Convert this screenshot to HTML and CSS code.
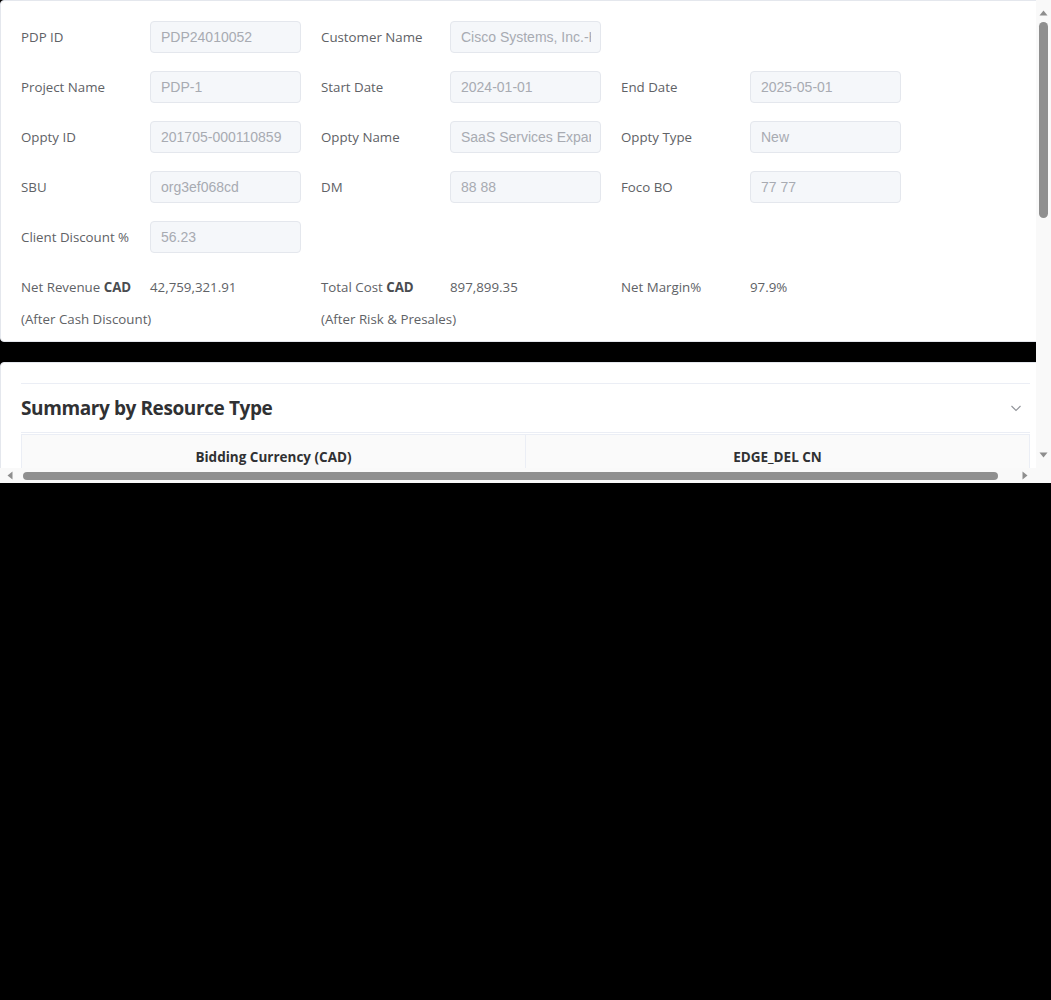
FILE: index.html
```html
<!DOCTYPE html>
<html lang="en">
<head>
<meta charset="utf-8">
<title>PDP Summary</title>
<link rel="stylesheet" href="styles.css">
</head>
<body>
<div class="frame">
  <div class="pane">
    <div class="canvas">
      <section class="card info">
        <div class="form-grid">
          <div class="item"><span class="label">PDP ID</span><input class="field" disabled value="PDP24010052"></div>
          <div class="item"><span class="label">Customer Name</span><input class="field" disabled value="Cisco Systems, Inc.-HQ"></div>
          <div class="item empty"></div>

          <div class="item"><span class="label">Project Name</span><input class="field" disabled value="PDP-1"></div>
          <div class="item"><span class="label">Start Date</span><input class="field" disabled value="2024-01-01"></div>
          <div class="item"><span class="label">End Date</span><input class="field" disabled value="2025-05-01"></div>

          <div class="item"><span class="label">Oppty ID</span><input class="field" disabled value="201705-000110859"></div>
          <div class="item"><span class="label">Oppty Name</span><input class="field" disabled value="SaaS Services Expansion"></div>
          <div class="item"><span class="label">Oppty Type</span><input class="field" disabled value="New"></div>

          <div class="item"><span class="label">SBU</span><input class="field" disabled value="org3ef068cd"></div>
          <div class="item"><span class="label">DM</span><input class="field" disabled value="88 88"></div>
          <div class="item"><span class="label">Foco BO</span><input class="field" disabled value="77 77"></div>

          <div class="item"><span class="label">Client Discount %</span><input class="field" disabled value="56.23"></div>
          <div class="item empty"></div>
          <div class="item empty"></div>

          <div class="stat">
            <div class="stat-line"><span class="label">Net Revenue <b>CAD</b></span><span class="value">42,759,321.91</span></div>
            <div class="stat-sub">(After Cash Discount)</div>
          </div>
          <div class="stat">
            <div class="stat-line"><span class="label">Total Cost <b>CAD</b></span><span class="value">897,899.35</span></div>
            <div class="stat-sub">(After Risk &amp; Presales)</div>
          </div>
          <div class="stat">
            <div class="stat-line"><span class="label">Net Margin%</span><span class="value">97.9%</span></div>
          </div>
        </div>
      </section>

      <section class="card summary">
        <div class="collapse-item">
          <div class="collapse-head">
            <h2 class="title">Summary by Resource Type</h2>
            <svg class="chevron" width="12" height="12" viewBox="0 0 12 12" aria-hidden="true"><path d="M1.5 4 L6 8.5 L10.5 4" fill="none" stroke="#909399" stroke-width="1.1"/></svg>
          </div>
          <div class="collapse-body">
            <table class="grid">
              <thead>
                <tr><th colspan="2">Bidding Currency (CAD)</th><th colspan="2">EDGE_DEL CN</th></tr>
              </thead>
            </table>
          </div>
        </div>
      </section>
    </div>
  </div>

  <div class="vbar">
    <div class="sb-btn up"><svg width="9" height="6" viewBox="0 0 9 6"><path d="M4.5 0.5 L8.5 5.5 L0.5 5.5 Z" fill="#8e8e8e"/></svg></div>
    <div class="vthumb"></div>
    <div class="sb-fill"></div>
    <div class="sb-btn down"><svg width="9" height="6" viewBox="0 0 9 6"><path d="M0.5 0.5 L8.5 0.5 L4.5 5.5 Z" fill="#8e8e8e"/></svg></div>
  </div>

  <div class="hbar">
    <div class="sb-btn left"><svg width="6" height="9" viewBox="0 0 6 9"><path d="M0.5 4.5 L5.5 0.5 L5.5 8.5 Z" fill="#8e8e8e"/></svg></div>
    <div class="hthumb"></div>
    <div class="sb-fill"></div>
    <div class="sb-btn right"><svg width="6" height="9" viewBox="0 0 6 9"><path d="M0.5 0.5 L5.5 4.5 L0.5 8.5 Z" fill="#8e8e8e"/></svg></div>
  </div>

  <div class="corner"></div>
</div>
</body>
</html>
```

FILE: styles.css
```css
html, body {
  margin: 0;
  padding: 0;
  background: #000;
}

.frame {
  width: 1051px;
  height: 483px;
  display: grid;
  grid-template-columns: 1036px 15px;
  grid-template-rows: 468px 15px;
  background: #000;
  font-family: "Open Sans", "Noto Sans", sans-serif;
  font-size: 13.3px;
  color: #606266;
}

.pane {
  overflow: hidden;
  background: #000;
}

.canvas {
  width: 1068px;
  display: flex;
  flex-direction: column;
  gap: 20px;
}

/* fake scrollbars */
.vbar, .hbar, .corner {
  background: #f9f9f9;
}
.vbar {
  display: flex;
  flex-direction: column;
}
.hbar {
  display: flex;
  flex-direction: row;
  align-items: center;
}
.sb-btn {
  display: flex;
  align-items: center;
  justify-content: center;
  flex: none;
}
.sb-btn svg { display: block; }
.sb-btn.up {
  height: 22px;
  padding-top: 3px;
  box-sizing: border-box;
}
.sb-btn.down {
  height: 22px;
  padding-bottom: 4px;
  box-sizing: border-box;
}
.sb-btn.left {
  width: 22px;
  height: 15px;
  padding-right: 2px;
  box-sizing: border-box;
}
.sb-btn.right {
  width: 22px;
  height: 15px;
  padding-right: 1px;
  box-sizing: border-box;
}
.sb-fill {
  flex: 1;
}
.vthumb {
  width: 9px;
  height: 196px;
  margin-left: 3px;
  border-radius: 5px;
  background: #8f8f8f;
  flex: none;
}
.hthumb {
  width: 975px;
  height: 8px;
  margin-left: 1px;
  border-radius: 4px;
  background: #8f8f8f;
  flex: none;
}

/* cards */
.card {
  width: 1051px;
  box-sizing: border-box;
  background: #fff;
  border: 1px solid #e4e7ed;
  border-radius: 4px;
}

.info {
  padding: 20px 20px 6px 20px;
}

.form-grid {
  display: grid;
  grid-template-columns: repeat(3, 279px);
  column-gap: 21px;
  row-gap: 18px;
}

.item {
  display: flex;
  align-items: center;
  height: 32px;
}

.label {
  width: 129px;
  flex: none;
  line-height: 32px;
  white-space: nowrap;
  color: #606266;
}
.label b {
  font-weight: 700;
  color: #4a4c50;
}

.field {
  width: 151px;
  height: 32px;
  box-sizing: border-box;
  margin: 0;
  padding: 0 9px 0 10px;
  border: 1px solid #e4e7ed;
  border-radius: 4px;
  background: #f5f7fa;
  font-family: "Liberation Sans", Arial, sans-serif;
  font-size: 14px;
  color: #a8abb2;
  -webkit-text-fill-color: #a8abb2;
  opacity: 1;
  outline: none;
}

.stat {
  display: flex;
  flex-direction: column;
}
.stat-line {
  display: flex;
  align-items: center;
  height: 32px;
}
.value {
  line-height: 32px;
  color: #606266;
}
.stat-sub {
  line-height: 32px;
  white-space: nowrap;
}

.summary {
  padding: 20px;
  height: 684px;
}

.collapse-item {
  border-top: 1px solid #ebeef5;
}

.collapse-head {
  display: flex;
  align-items: center;
  justify-content: space-between;
  height: 48px;
  padding-right: 8px;
  border-bottom: 1px solid #ebeef5;
}

.title {
  margin: 0;
  font-size: 19px;
  letter-spacing: -0.4px;
  font-weight: 700;
  color: #303133;
}

.chevron {
  display: block;
}

.grid {
  width: 100%;
  border-collapse: collapse;
  table-layout: fixed;
  margin-top: 1px;
}
.grid th {
  border: 1px solid #ebeef5;
  text-align: center;
  height: 44px;
  padding: 0 10px;
  background: #fafafa;
  font-size: 13.5px;
  font-weight: 700;
  color: #303133;
}
```
